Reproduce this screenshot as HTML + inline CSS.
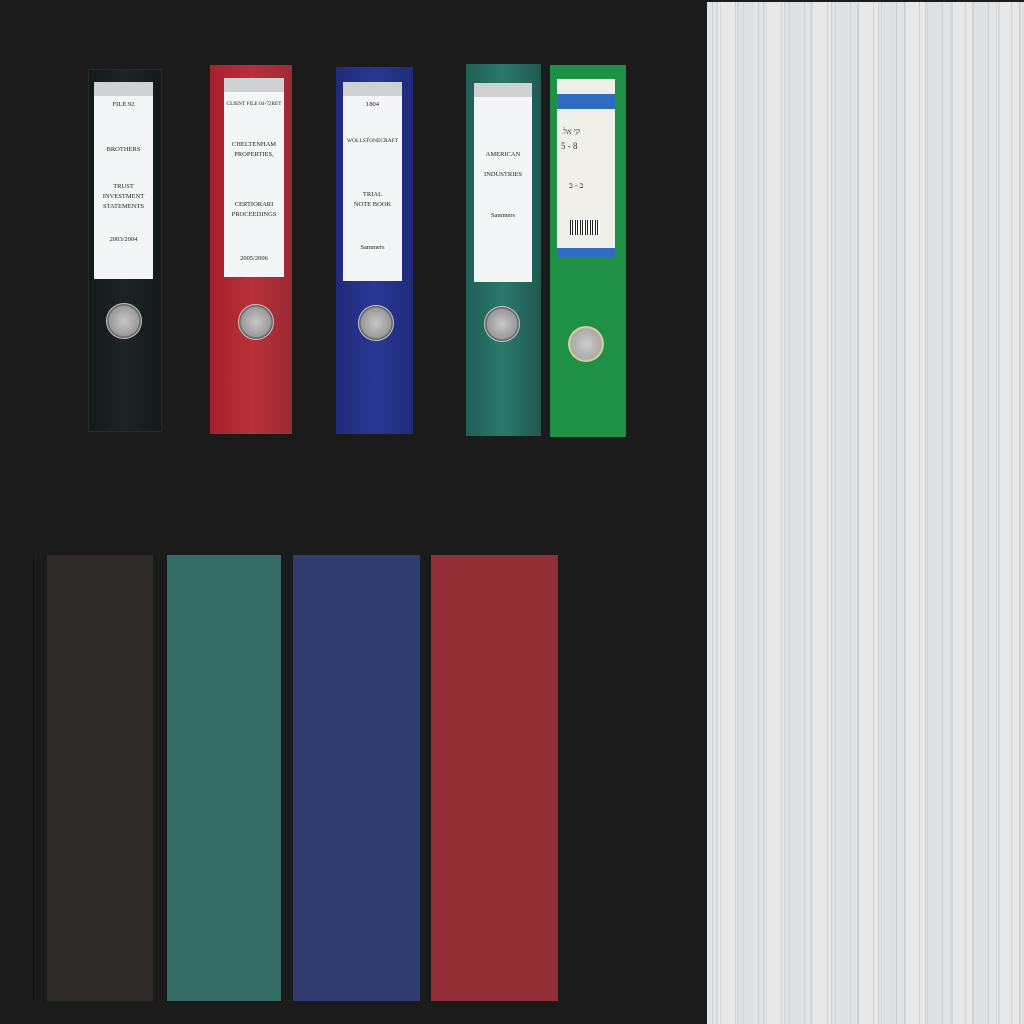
<!DOCTYPE html>
<html><head><meta charset="utf-8"><style>
body{margin:0;width:1024px;height:1024px;background:#1b1b1b;position:relative;overflow:hidden;font-family:"Liberation Serif",serif}
.a{position:absolute}
.b{position:absolute;box-sizing:border-box}
.lab{position:absolute;background:#f4f5f6;text-align:center;font-size:6.5px;color:#222;line-height:10px;white-space:nowrap}
.lab .top{height:14px;background:#cfd1d3}
.ring{position:absolute;width:36px;height:36px;border-radius:50%;background:radial-gradient(circle at 50% 50%,#c8c8c8 0,#9a9a9a 58%,#5a5a5a 64%,#e0e0e0 70%,#8a8a8a 80%,rgba(0,0,0,0) 82%)}
.sw{position:absolute;top:555px;height:446px}
</style></head><body>
<div class="b" style="left:88px;top:69px;width:74px;height:363px;background:linear-gradient(90deg,#141818,#1e2424 50%,#141818);border:1px solid #2a2a2a"></div>
<div class="lab" style="left:94px;top:82px;width:59px;height:197px"><div class="top"></div><div style="margin-top:4px">FILE 92</div><div style="margin-top:35px">BROTHERS</div><div style="margin-top:27px">TRUST<br>INVESTMENT<br>STATEMENTS</div><div style="margin-top:23px">2003/2004</div></div>
<div class="ring" style="left:106px;top:303px"></div>

<div class="b" style="left:210px;top:65px;width:82px;height:369px;background:linear-gradient(90deg,#a61f2a,#b8303a 50%,#9c2a33)"></div>
<div class="lab" style="left:224px;top:78px;width:60px;height:199px"><div class="top"></div><div style="margin-top:7px;font-size:5.3px">CLIENT FILE 04-72RET</div><div style="margin-top:31px">CHELTENHAM<br>PROPERTIES,</div><div style="margin-top:40px">CERTIORARI<br>PROCEEDINGS</div><div style="margin-top:34px">2005/2006</div></div>
<div class="ring" style="left:238px;top:304px"></div>

<div class="b" style="left:336px;top:67px;width:77px;height:367px;background:linear-gradient(90deg,#1f2a7a,#2a3794 50%,#1f2a7a)"></div>
<div class="lab" style="left:343px;top:82px;width:59px;height:199px"><div class="top"></div><div style="margin-top:4px">1804</div><div style="margin-top:26px;font-size:5.5px">WOLLSTONECRAFT</div><div style="margin-top:44px">TRIAL<br>NOTE BOOK</div><div style="margin-top:33px">Sammers</div></div>
<div class="ring" style="left:358px;top:305px"></div>

<div class="b" style="left:466px;top:64px;width:75px;height:372px;background:linear-gradient(90deg,#1f5e55,#2b786c 50%,#20594f)"></div>
<div class="lab" style="left:474px;top:83px;width:58px;height:199px"><div class="top"></div><div style="margin-top:53px">AMERICAN</div><div style="margin-top:10px">INDUSTRIES</div><div style="margin-top:31px">Sammers</div></div>
<div class="ring" style="left:484px;top:306px"></div>

<div class="b" style="left:550px;top:65px;width:76px;height:372px;background:#1f9146"></div>
<div class="a" style="left:557px;top:79px;width:58px;height:179px;background:#f1efe9">
 <div class="a" style="left:0;top:15px;width:58px;height:15px;background:#2f6cc4"></div>
 <div class="a" style="left:6px;top:48px;font-size:8px;font-style:italic;color:#333">קי אל</div>
 <div class="a" style="left:4px;top:62px;font-size:9px;color:#333">5 - 8</div>
 <div class="a" style="left:12px;top:102px;font-size:8px;color:#333">ב - ב</div>
 <div class="a" style="left:13px;top:141px;width:30px;height:15px;background:repeating-linear-gradient(90deg,#222 0 1px,#fff 1px 2px,#222 2px 3px,#fff 3px 5px)"></div>
 <div class="a" style="left:0;top:169px;width:58px;height:10px;background:#2f6cc4"></div>
</div>
<div class="ring" style="left:568px;top:326px;background:radial-gradient(circle,#ccc 0,#aaa 60%,#e8d9a0 68%,#8a7a40 78%,#1f9146 80%)"></div>

<div class="sw" style="left:33px;width:1px;background:#111"></div>
<div class="sw" style="left:47px;width:106px;background:#2f2a2a"></div>
<div class="sw" style="left:167px;width:114px;background:#336c64"></div>
<div class="sw" style="left:293px;width:127px;background:#313d71"></div>
<div class="sw" style="left:431px;width:127px;background:#922f36"></div>

<div class="a" style="left:707px;top:2px;width:317px;height:1022px;background:
repeating-linear-gradient(90deg,rgba(0,0,0,0) 0 5px,rgba(140,140,145,.25) 5px 6px,rgba(0,0,0,0) 6px 13px,rgba(160,160,165,.18) 13px 14px,rgba(0,0,0,0) 14px 23px),
repeating-linear-gradient(90deg,#e2e3e4 0 9px,#d6d7d9 9px 11px,#e8e8e9 11px 30px,#cfd0d2 30px 31px,#dfe0e1 31px 47px);"></div>
</body></html>
